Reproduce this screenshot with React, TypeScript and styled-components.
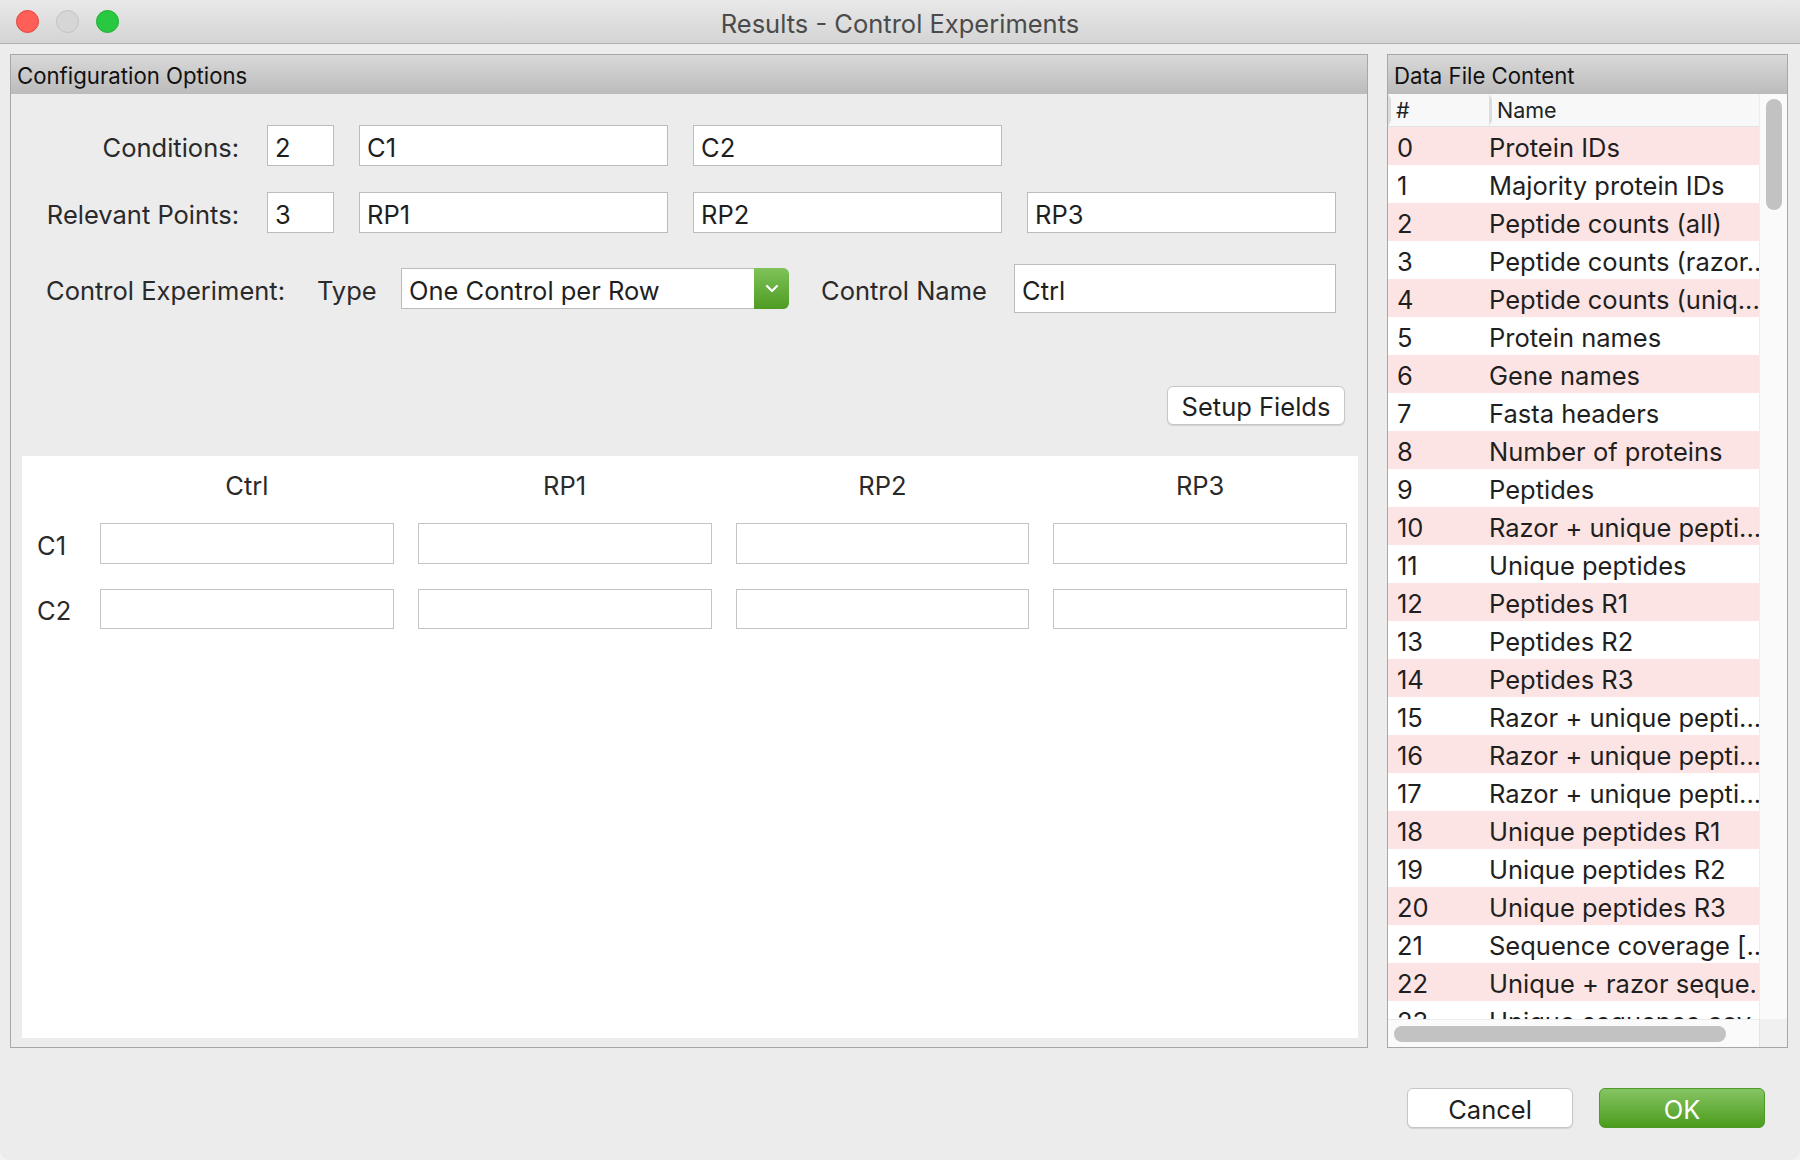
import React from 'react';
import styled, { createGlobalStyle } from 'styled-components';

const conditions = ['C1', 'C2'];
const points = ['RP1', 'RP2', 'RP3'];
const columns = ['Ctrl', 'RP1', 'RP2', 'RP3'];

const dataColumns = [
  'Protein IDs',
  'Majority protein IDs',
  'Peptide counts (all)',
  'Peptide counts (razor...',
  'Peptide counts (uniq...',
  'Protein names',
  'Gene names',
  'Fasta headers',
  'Number of proteins',
  'Peptides',
  'Razor + unique pepti...',
  'Unique peptides',
  'Peptides R1',
  'Peptides R2',
  'Peptides R3',
  'Razor + unique pepti...',
  'Razor + unique pepti...',
  'Razor + unique pepti...',
  'Unique peptides R1',
  'Unique peptides R2',
  'Unique peptides R3',
  'Sequence coverage [...',
  'Unique + razor seque...',
  'Unique sequence cov...',
  'Mol. weight [kDa]',
];

const App: React.FC = () => {
  return (
    <>
      <GlobalStyle />
      <Window>
        <TitleBar>
          <Lights>
            <Light color="#fe5f57" edge="#e2463f" />
            <Light color="#d6d6d6" edge="#c2c2c2" />
            <Light color="#28c840" edge="#1fae33" />
          </Lights>
          <Title>Results - Control Experiments</Title>
          <div />
        </TitleBar>

        <Body>
          <Panels>
            <ConfigPanel>
              <PanelHeader>Configuration Options</PanelHeader>
              <ConfigContent>
                <FieldGrid>
                  <FieldLabel>Conditions:</FieldLabel>
                  <TextBox value="2" readOnly />
                  {conditions.map((c) => (
                    <TextBox key={c} value={c} readOnly />
                  ))}
                  <div />
                  <FieldLabel>Relevant Points:</FieldLabel>
                  <TextBox value="3" readOnly />
                  {points.map((p) => (
                    <TextBox key={p} value={p} readOnly />
                  ))}
                </FieldGrid>

                <ControlRow>
                  <InlineLabel width={271}>Control Experiment:</InlineLabel>
                  <InlineLabel width={84}>Type</InlineLabel>
                  <Select>
                    <SelectValue>One Control per Row</SelectValue>
                    <SelectButton>
                      <svg width="14" height="9" viewBox="0 0 14 9">
                        <path d="M2 2 L7 7 L12 2" fill="none" stroke="#fff" strokeWidth="2.2" strokeLinecap="round" strokeLinejoin="round" />
                      </svg>
                    </SelectButton>
                  </Select>
                  <InlineLabel width={193} gap={32}>Control Name</InlineLabel>
                  <TextBox value="Ctrl" readOnly width={322} height={49} />
                </ControlRow>

                <SetupRow>
                  <PushButton>Setup Fields</PushButton>
                </SetupRow>

                <MatrixArea>
                  <MatrixGrid>
                    <div />
                    {columns.map((c) => (
                      <ColumnHead key={c}>{c}</ColumnHead>
                    ))}
                    {conditions.map((c) => (
                      <React.Fragment key={c}>
                        <RowHead>{c}</RowHead>
                        {columns.map((col) => (
                          <MatrixCell key={col} readOnly value="" />
                        ))}
                      </React.Fragment>
                    ))}
                  </MatrixGrid>
                </MatrixArea>
              </ConfigContent>
            </ConfigPanel>

            <DataPanel>
              <PanelHeader>Data File Content</PanelHeader>
              <ListArea>
                <ListTable>
                  <ListHeader>
                    <HeaderCell width={101}>#</HeaderCell>
                    <HeaderCell>Name</HeaderCell>
                  </ListHeader>
                  <ListRows>
                    {dataColumns.map((name, i) => (
                      <ListRow key={i} striped={i % 2 === 0}>
                        <IndexCell>{i}</IndexCell>
                        <NameCell>{name}</NameCell>
                      </ListRow>
                    ))}
                  </ListRows>
                </ListTable>
                <VScroll>
                  <VThumb />
                </VScroll>
              </ListArea>
              <HScrollRow>
                <HScroll>
                  <HThumb />
                </HScroll>
                <ScrollCorner />
              </HScrollRow>
            </DataPanel>
          </Panels>

          <Footer>
            <PushButton wide>Cancel</PushButton>
            <DefaultButton>OK</DefaultButton>
          </Footer>
        </Body>
      </Window>
    </>
  );
};

const GlobalStyle = createGlobalStyle`
  html, body {
    margin: 0;
    padding: 0;
    background: #f2f2f2;
  }
  body {
    font-family: Inter, "Liberation Sans", sans-serif;
    color: #1f1f1f;
  }
  * {
    box-sizing: border-box;
  }
`;

const Window = styled.div`
  width: 1800px;
  height: 1160px;
  display: flex;
  flex-direction: column;
  background: #ececec;
  border-radius: 0 0 10px 10px;
  overflow: hidden;
`;

const TitleBar = styled.div`
  height: 44px;
  flex-shrink: 0;
  display: grid;
  grid-template-columns: 1fr auto 1fr;
  align-items: center;
  background: linear-gradient(#e9e9e9, #d4d4d4);
  border-bottom: 1px solid #b1b1b1;
`;

const Lights = styled.div`
  display: flex;
  gap: 17px;
  padding-left: 16px;
`;

const Light = styled.span<{ color: string; edge: string }>`
  width: 23px;
  height: 23px;
  border-radius: 50%;
  background: ${(p) => p.color};
  border: 1px solid ${(p) => p.edge};
`;

const Title = styled.div`
  padding-top: 3px;
  font-size: 25.5px;
  color: #4b4b4b;
`;

const Body = styled.div`
  flex: 1;
  display: flex;
  flex-direction: column;
  padding: 10px 12px 0 10px;
`;

const Panels = styled.div`
  display: flex;
  gap: 19px;
  height: 994px;
`;

const ConfigPanel = styled.section`
  width: 1358px;
  display: flex;
  flex-direction: column;
  border: 1px solid #a7a7a7;
  background: #ececec;
`;

const PanelHeader = styled.div`
  height: 39px;
  flex-shrink: 0;
  display: flex;
  align-items: center;
  padding: 2px 0 0 6px;
  font-size: 22.2px;
  color: #111;
  background: linear-gradient(#d9d9d9, #bbbbbb);
`;

const ConfigContent = styled.div`
  flex: 1;
  display: flex;
  flex-direction: column;
  padding: 0 9px 9px 11px;
`;

const FieldGrid = styled.div`
  display: grid;
  grid-template-columns: 196px 67px 309px 309px 309px;
  grid-auto-rows: 41px;
  column-gap: 25px;
  row-gap: 26px;
  margin: 31px 0 0 24px;
`;

const FieldLabel = styled.div`
  display: flex;
  align-items: center;
  justify-content: flex-end;
  padding: 3px 3px 0 0;
  font-size: 25.5px;
  color: #2a2a2a;
`;

const TextBox = styled.input<{ width?: number; height?: number }>`
  width: ${(p) => (p.width ? `${p.width}px` : '100%')};
  height: ${(p) => (p.height ? `${p.height}px` : '41px')};
  border: 1px solid #bcbcbc;
  background: #fff;
  padding: 3px 7px 0;
  font-family: inherit;
  font-size: 25.5px;
  color: #1f1f1f;
  outline: none;
  border-radius: 0;
`;

const ControlRow = styled.div`
  display: flex;
  align-items: center;
  margin: 31px 0 0 24px;
`;

const InlineLabel = styled.div<{ width: number; gap?: number }>`
  width: ${(p) => p.width}px;
  margin-left: ${(p) => p.gap || 0}px;
  padding-top: 3px;
  flex-shrink: 0;
  font-size: 25.5px;
  color: #2a2a2a;
`;

const Select = styled.div`
  width: 388px;
  height: 41px;
  display: flex;
  border: 1px solid #bcbcbc;
  border-right: none;
  border-radius: 0 6px 6px 0;
  background: #fff;
`;

const SelectValue = styled.div`
  flex: 1;
  display: flex;
  align-items: center;
  padding: 3px 0 0 7px;
  font-size: 25.5px;
  color: #1f1f1f;
`;

const SelectButton = styled.div`
  width: 35px;
  margin: -1px 0;
  display: flex;
  align-items: center;
  justify-content: center;
  border-radius: 0 6px 6px 0;
  background: linear-gradient(#7fc25a, #4d9c21);
`;

const SetupRow = styled.div`
  display: flex;
  justify-content: flex-end;
  margin: 73px 13px 0 0;
`;

const PushButton = styled.button<{ wide?: boolean }>`
  width: ${(p) => (p.wide ? '166px' : '178px')};
  height: ${(p) => (p.wide ? '40px' : '39px')};
  border: 1px solid #c6c6c6;
  border-radius: 6px;
  background: #fff;
  box-shadow: 0 1px 1px rgba(0, 0, 0, 0.12);
  font-family: inherit;
  font-size: 25.5px;
  color: #1f1f1f;
  padding: 2px 0 0;
`;

const MatrixArea = styled.div`
  flex: 1;
  margin-top: 31px;
  background: #fff;
  padding: 14px 11px 0 15px;
`;

const MatrixGrid = styled.div`
  display: grid;
  grid-template-columns: 39px repeat(4, 1fr);
  grid-template-rows: 28px 41px 40px;
  column-gap: 24px;
  row-gap: 25px;
`;

const ColumnHead = styled.div`
  display: flex;
  align-items: center;
  justify-content: center;
  padding-top: 2px;
  font-size: 25.5px;
  color: #2a2a2a;
`;

const RowHead = styled.div`
  display: flex;
  align-items: center;
  padding-top: 3px;
  font-size: 25.5px;
  color: #2a2a2a;
`;

const MatrixCell = styled.input`
  width: 100%;
  height: 100%;
  border: 1px solid #c4c4c4;
  background: #fff;
  outline: none;
  border-radius: 0;
`;

const DataPanel = styled.section`
  width: 401px;
  display: flex;
  flex-direction: column;
  border: 1px solid #a7a7a7;
  background: #fff;
`;

const ListArea = styled.div`
  flex: 1;
  display: flex;
  min-height: 0;
`;

const ListTable = styled.div`
  flex: 1;
  display: flex;
  flex-direction: column;
  min-width: 0;
  overflow: hidden;
`;

const ListHeader = styled.div`
  height: 33px;
  flex-shrink: 0;
  display: flex;
  align-items: center;
  background: #f8f8f8;
  border-bottom: 1px solid #e2e2e2;
`;

const HeaderCell = styled.div<{ width?: number }>`
  width: ${(p) => (p.width ? `${p.width}px` : 'auto')};
  flex: ${(p) => (p.width ? '0 0 auto' : '1')};
  height: 100%;
  display: flex;
  align-items: center;
  padding: 2px 0 0 5px;
  font-size: 21.5px;
  color: #222;
  border-left: 3px solid #dcdcdc;
  border-top: 5px solid transparent;
  border-bottom: 5px solid transparent;
  background-clip: padding-box;
  line-height: 1;
`;

const ListRows = styled.div`
  flex: 1;
  overflow: hidden;
`;

const ListRow = styled.div<{ striped: boolean }>`
  height: 38px;
  display: flex;
  align-items: center;
  padding-top: 2px;
  background: ${(p) => (p.striped ? '#fde4e4' : '#fff')};
  font-size: 25.5px;
  color: #1f1f1f;
`;

const IndexCell = styled.div`
  width: 101px;
  flex-shrink: 0;
  padding-left: 9px;
`;

const NameCell = styled.div`
  flex: 1;
  white-space: nowrap;
  overflow: hidden;
`;

const VScroll = styled.div`
  width: 28px;
  flex-shrink: 0;
  background: #fafafa;
  border-left: 1px solid #ededed;
  padding: 5px 5px 0 6px;
`;

const VThumb = styled.div`
  height: 111px;
  border-radius: 8px;
  background: #c2c2c2;
`;

const HScrollRow = styled.div`
  height: 28px;
  flex-shrink: 0;
  display: flex;
`;

const HScroll = styled.div`
  flex: 1;
  background: #fafafa;
  border-top: 1px solid #ededed;
  padding: 6px 0 0 6px;
`;

const HThumb = styled.div`
  width: 332px;
  height: 16px;
  border-radius: 8px;
  background: #c2c2c2;
`;

const ScrollCorner = styled.div`
  width: 28px;
  background: #f0f0f0;
  border-left: 1px solid #e4e4e4;
`;

const Footer = styled.div`
  display: flex;
  justify-content: flex-end;
  gap: 26px;
  padding: 40px 23px 0 0;
`;

const DefaultButton = styled.button`
  width: 166px;
  height: 40px;
  border: 1px solid #4f9a26;
  border-radius: 6px;
  background: linear-gradient(#86c464, #4b9c1d);
  font-family: inherit;
  font-size: 25.5px;
  color: #fff;
  padding: 2px 0 0;
`;

export default App;
